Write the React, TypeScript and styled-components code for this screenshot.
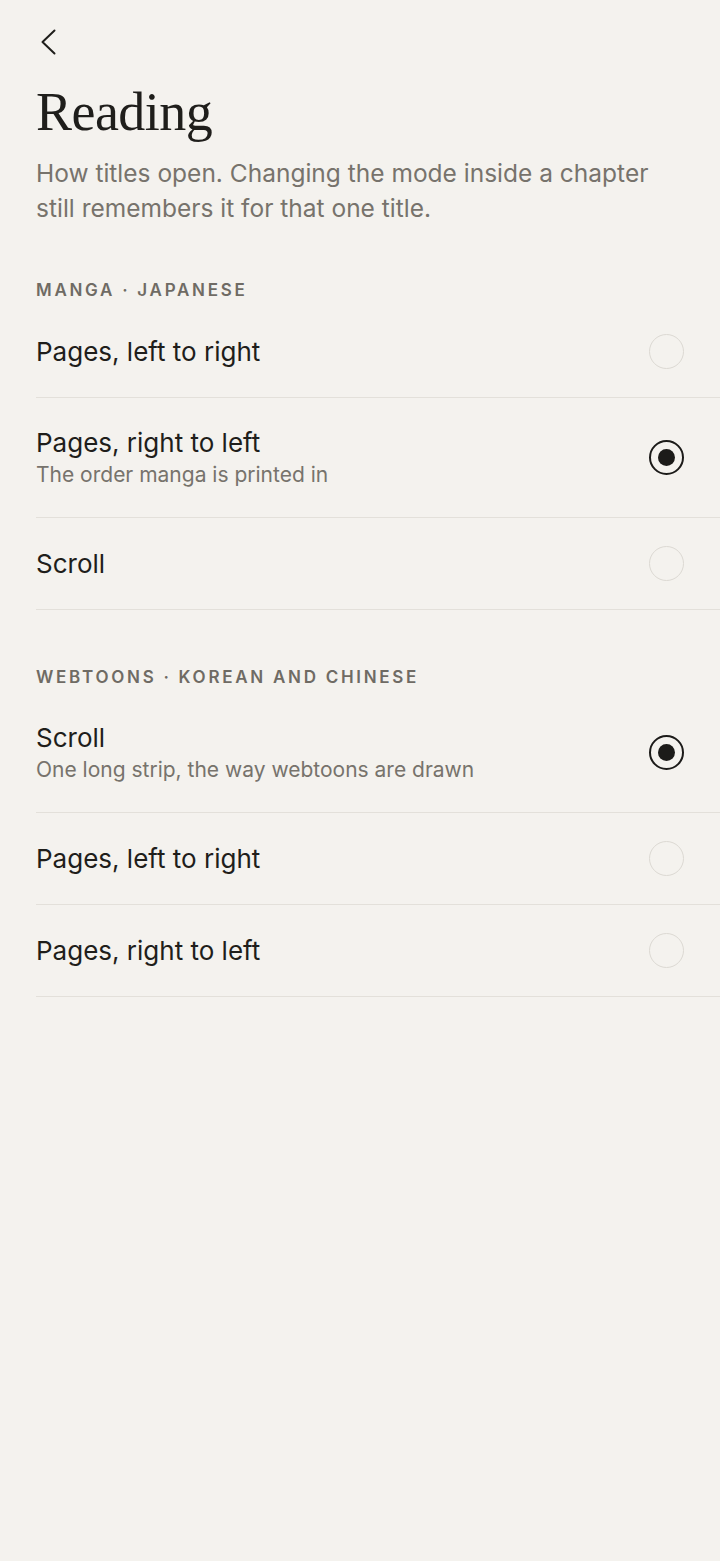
import styled, { createGlobalStyle } from 'styled-components'

const GlobalStyle = createGlobalStyle`
  html, body {
    margin: 0;
    padding: 0;
    background: #f4f2ee;
  }
  body {
    font-family: Inter, "Noto Sans", sans-serif;
    color: #1f1e1b;
    -webkit-font-smoothing: antialiased;
  }
`

const Page = styled.main`
  min-height: 1561px;
  box-sizing: border-box;
  padding-left: 36px;
  background: #f4f2ee;
`

const Header = styled.header`
  padding-right: 36px;
  padding-top: 28px;
`

const BackButton = styled.button`
  display: flex;
  align-items: center;
  justify-content: center;
  width: 28px;
  height: 28px;
  margin-left: -2px;
  padding: 0;
  border: none;
  background: none;
  color: #1f1e1b;
  cursor: pointer;
`

const Title = styled.h1`
  margin: 24px 0 0;
  font-family: "Liberation Serif", "DejaVu Serif", serif;
  font-weight: 400;
  font-size: 54px;
  line-height: 64px;
  letter-spacing: -0.01em;
  color: #1f1e1b;
`

const Lede = styled.p`
  margin: 12px 0 0;
  max-width: 640px;
  font-size: 24.5px;
  line-height: 35px;
  color: #77736c;
`

const Section = styled.section<{ $first?: boolean }>`
  margin-top: ${(p) => (p.$first ? '54px' : '57px')};
`

const SectionLabel = styled.h2`
  margin: 0 0 6px;
  font-size: 17px;
  line-height: 20px;
  font-weight: 600;
  letter-spacing: 0.16em;
  text-transform: uppercase;
  color: #6f6b64;
`

const Row = styled.label`
  display: flex;
  align-items: center;
  justify-content: space-between;
  gap: 16px;
  min-height: 91px;
  padding-right: 36px;
  border-bottom: 1px solid #e3e0da;
  cursor: pointer;
`

const RowText = styled.div`
  display: flex;
  flex-direction: column;
  padding: 29px 0;
`

const RowTitle = styled.span`
  font-size: 26px;
  line-height: 31px;
  color: #1f1e1b;
`

const RowHint = styled.span`
  margin-top: 4px;
  font-size: 21px;
  line-height: 26px;
  color: #77736c;
`

const Radio = styled.span<{ $on: boolean }>`
  flex: none;
  box-sizing: border-box;
  width: 35px;
  height: 35px;
  border-radius: 50%;
  border: ${(p) => (p.$on ? '2px solid #1c1b19' : '1.5px solid #dcd9d3')};
  display: flex;
  align-items: center;
  justify-content: center;

  &::after {
    content: '';
    display: ${(p) => (p.$on ? 'block' : 'none')};
    width: 17px;
    height: 17px;
    border-radius: 50%;
    background: #1c1b19;
  }
`

type Option = { title: string; hint?: string; on?: boolean }

const sections: { label: string; options: Option[] }[] = [
  {
    label: 'Manga · Japanese',
    options: [
      { title: 'Pages, left to right' },
      { title: 'Pages, right to left', hint: 'The order manga is printed in', on: true },
      { title: 'Scroll' },
    ],
  },
  {
    label: 'Webtoons · Korean and Chinese',
    options: [
      { title: 'Scroll', hint: 'One long strip, the way webtoons are drawn', on: true },
      { title: 'Pages, left to right' },
      { title: 'Pages, right to left' },
    ],
  },
]

export default function App() {
  return (
    <>
      <GlobalStyle />
      <Page>
        <Header>
          <BackButton aria-label='Back'>
            <svg width='16' height='26' viewBox='0 0 16 26' fill='none'>
              <polyline
                points='14.5,1.5 2.5,13 14.5,24.5'
                stroke='currentColor'
                strokeWidth='2'
                strokeLinecap='round'
                strokeLinejoin='round'
              />
            </svg>
          </BackButton>
          <Title>Reading</Title>
          <Lede>
            How titles open. Changing the mode inside a chapter still remembers
            it for that one title.
          </Lede>
        </Header>
        {sections.map((s, i) => (
          <Section key={s.label} $first={i === 0}>
            <SectionLabel>{s.label}</SectionLabel>
            {s.options.map((o) => (
              <Row key={o.title}>
                <RowText>
                  <RowTitle>{o.title}</RowTitle>
                  {o.hint && <RowHint>{o.hint}</RowHint>}
                </RowText>
                <Radio $on={!!o.on} />
              </Row>
            ))}
          </Section>
        ))}
      </Page>
    </>
  )
}
